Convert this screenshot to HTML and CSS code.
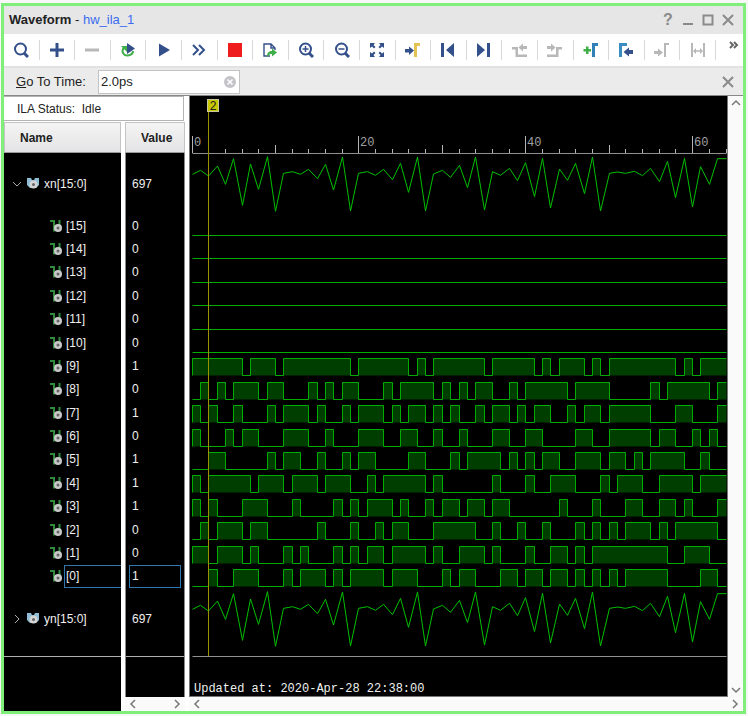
FILE: index.html
```html
<!DOCTYPE html>
<html lang="en">
<head>
<meta charset="utf-8">
<title>Waveform - hw_ila_1</title>
<link rel="stylesheet" href="styles.css">
</head>
<body>
<main class="window">
  <header class="titlebar">
    <h1 class="title">Waveform <span class="dash">-</span> <span class="core">hw_ila_1</span></h1>
    <div class="window-buttons">
      <button type="button" aria-label="Help" class="help">?</button>
      <button type="button" aria-label="Minimize"><svg viewBox="0 0 12 12"><path d="M1 10H11"/></svg></button>
      <button type="button" aria-label="Maximize"><svg viewBox="0 0 12 12"><path d="M1.500 1.500H10.500V10.500H1.500Z"/></svg></button>
      <button type="button" aria-label="Close"><svg viewBox="0 0 12 12"><path d="M1 1L11 11M11 1L1 11"/></svg></button>
    </div>
  </header>

  <div class="toolbar" role="toolbar">
    <button type="button" aria-label="Find"><svg viewBox="0 0 16 16"><g class="line"><circle cx="7.500" cy="7" r="5.500"/><path d="M11 11L15 15" stroke-width="3"/></g></svg></button>
    <button type="button" aria-label="Add"><svg viewBox="0 0 16 16"><path class="navy" d="M6.500 1h3v5.500H15v3H9.500V15h-3V9.500H1v-3h5.500z"/></svg></button>
    <button type="button" aria-label="Remove"><svg viewBox="0 0 16 16"><path class="gray" d="M1 6.500h14v3H1z"/></svg></button>
    <button type="button" aria-label="Re-trigger"><svg viewBox="0 0 16 16"><path d="M3.500 6C1 10 4 14 8 13.500C11 13 13 11.500 13 9" fill="none" stroke="#3fae49" stroke-width="2"/><path class="green" d="M1 4h6v6z"/><path class="navy" d="M7 1l8 5.500L7 12z"/></svg></button>
    <button type="button" aria-label="Run trigger"><svg viewBox="0 0 16 16"><path class="navy" d="M3 1.500l11 6.500-11 6.500z"/></svg></button>
    <button type="button" aria-label="Run immediately"><svg viewBox="0 0 16 16"><path class="line" d="M2 3l5 5-5 5M8 3l5 5-5 5"/></svg></button>
    <button type="button" aria-label="Stop"><svg viewBox="0 0 16 16"><path fill="#ee1c1c" d="M1 1h14v14H1z"/></svg></button>
    <button type="button" aria-label="Export"><svg viewBox="0 0 16 16"><path fill="none" stroke="#34508a" stroke-width="1.400" d="M8 14H2V2h7l4 4v2M9 2v4h4"/><path class="green" d="M10 6.500l5 4-5 4V12c-2 0-3 .500-5 3 0-4.500 2-6 5-6z"/></svg></button>
    <button type="button" aria-label="Zoom in"><svg viewBox="0 0 16 16"><g class="line"><circle cx="7.500" cy="7" r="5.500"/><path d="M11 11L15 15" stroke-width="3"/><path stroke-width="1.500" d="M4.500 7h6M7.500 4v6"/></g></svg></button>
    <button type="button" aria-label="Zoom out"><svg viewBox="0 0 16 16"><g class="line"><circle cx="7.500" cy="7" r="5.500"/><path d="M11 11L15 15" stroke-width="3"/><path stroke-width="1.500" d="M4.500 7h6"/></g></svg></button>
    <button type="button" aria-label="Zoom fit"><svg viewBox="0 0 16 16"><path class="navy" d="M1 1h5L4.500 3l2 2L5 6.500l-2-2L1 6zM15 1v5l-2-1.500-2 2L9.500 5l2-2L10 1zM1 15v-5l2 1.500 2-2L6.500 11l-2 2L6 15zM15 15h-5l1.500-2-2-2L11 9.500l2 2 2-1.500z"/></svg></button>
    <button type="button" aria-label="Go to cursor"><svg viewBox="0 0 16 16"><path class="navy" d="M0 7h4V4.500l5 4L4 13v-2.500H0z"/><path fill="none" stroke="#e2c455" stroke-width="3" d="M10.500 15V2.500H15"/></svg></button>
    <button type="button" aria-label="Go to start"><svg viewBox="0 0 16 16"><path class="navy" d="M1 1h3v14H1zM14 1v14L6 8z"/></svg></button>
    <button type="button" aria-label="Go to end"><svg viewBox="0 0 16 16"><path class="navy" d="M11 1h3v14h-3zM1 1v14L9 8z"/></svg></button>
    <button type="button" aria-label="Previous transition"><svg viewBox="0 0 16 16"><path class="gray" d="M0 5h6v7.500h9V15H3.500V7.500H0zM6.500 5.500L11 1.500V4h4v3h-4v2.500z"/></svg></button>
    <button type="button" aria-label="Next transition"><svg viewBox="0 0 16 16"><path class="gray" d="M15 5H9v7.500H0V15h11.500V7.500H15zM8.500 5.500L4 1.500V4H0v3h4v2.500z"/></svg></button>
    <button type="button" aria-label="Add marker"><svg viewBox="0 0 16 16"><path class="green" d="M3 4.500h2.500V7H8v2.500H5.500V12H3V9.500H.500V7H3z"/><path fill="none" stroke="#2f7fb8" stroke-width="3" d="M10.500 15V2.500H15"/></svg></button>
    <button type="button" aria-label="Previous marker"><svg viewBox="0 0 16 16"><path fill="none" stroke="#3b8cc0" stroke-width="3" d="M2.500 15V2.500H9"/><path class="navy" d="M15 8h-4V5.500L5.500 10 11 14.500V12h4z"/></svg></button>
    <button type="button" aria-label="Next marker"><svg viewBox="0 0 16 16"><path class="gray" d="M0 9h4V6.500l5 4-5 4V12H0z"/><path fill="none" stroke="#b8b8b8" stroke-width="2" d="M11 15V2h4"/></svg></button>
    <button type="button" aria-label="Swap cursors"><svg viewBox="0 0 16 16"><path class="gray" d="M1 1h2v14H1zM13 1h2v14h-2zM3 9l3-3v2.250h4V6l3 3-3 3V9.750H6V12z"/></svg></button>
    <button type="button" class="more" aria-label="More tools"><svg viewBox="0 0 10 10"><path d="M1 2l3 3-3 3M5 2l3 3-3 3"/></svg></button>
  </div>

  <form class="gotobar">
    <label for="time"><u>G</u>o To Time:</label>
    <div class="field">
      <input id="time" type="text" value="2.0ps">
      <button type="button" aria-label="Clear"><svg viewBox="0 0 12 12"><circle cx="6" cy="6" r="6" fill="#c4c4c8"/><path d="M3.500 3.500l5 5M8.500 3.500l-5 5" stroke="#fff" stroke-width="1.500"/></svg></button>
    </div>
    <button type="button" class="close" aria-label="Close bar"><svg viewBox="0 0 12 12"><path d="M1 1L11 11M11 1L1 11"/></svg></button>
  </form>

  <div class="content">
    <section class="signals">
      <p class="status">ILA Status: &nbsp;Idle</p>
      <div class="columns">
        <div class="column">
          <h2>Name</h2>
          <div class="cells names" id="names"></div>
        </div>
        <div class="column">
          <h2>Value</h2>
          <div class="cells values" id="values"></div>
          <div class="hscroll"><svg viewBox="0 0 8 10"><path d="M6 1L2 5l4 4"/></svg><svg viewBox="0 0 8 10"><path d="M2 1l4 4-4 4"/></svg></div>
        </div>
      </div>
    </section>
    <section class="viewer">
      <div class="plot"><svg id="plot" role="img" aria-label="Signal waveforms"></svg><p class="updated">Updated at: 2020-Apr-28 22:38:00</p></div>
      <div class="vscroll"><svg viewBox="0 0 10 8"><path d="M1 6l4-4 4 4"/></svg><svg viewBox="0 0 10 8"><path d="M1 2l4 4 4-4"/></svg></div>
      <div class="hscroll"><svg viewBox="0 0 8 10"><path d="M6 1L2 5l4 4"/></svg><svg viewBox="0 0 8 10"><path d="M2 1l4 4-4 4"/></svg></div>
    </section>
  </div>
</main>
<script src="wave.js"></script>
</body>
</html>
```
FILE: styles.css
```css
* { box-sizing: border-box; }

body {
  margin: 0;
  background: #f7f7f8;
  color: #222;
  font: 12px/16px "Liberation Sans", Arial, sans-serif;
}

h1, h2, p { margin: 0; font-size: inherit; }

button {
  padding: 0;
  border: 0;
  background: none;
  color: inherit;
  font: inherit;
}

svg { display: block; }

.window {
  display: flex;
  flex-direction: column;
  height: calc(100vh - 5px);
  min-height: 700px;
  margin: 3px 2px 2px 1px;
  border: 3px solid #80ee7a;
  background: #fff;
}

/* Title bar */
.titlebar {
  display: flex;
  align-items: center;
  justify-content: space-between;
  height: 28px;
  padding: 0 9px 0 5px;
  background: #e6e6e6;
}
.title { font-size: 13px; }
.dash { font-weight: normal; }
.core { color: #3b6cf0; font-weight: normal; }
.window-buttons { display: flex; gap: 8px; color: #8a8a8a; }
.window-buttons button { width: 12px; height: 16px; }
.window-buttons svg, .close svg {
  width: 12px;
  height: 12px;
  margin: auto;
  fill: none;
  stroke: #8a8a8a;
  stroke-width: 2;
}
.window-buttons .help { font-size: 16px; font-weight: bold; }

/* Toolbar */
.toolbar {
  display: flex;
  align-items: center;
  height: 34px;
  border-bottom: 2px solid #e2e2e2;
}
.toolbar button {
  flex: 1;
  height: 20px;
  border-right: 1px solid #d8d8d8;
}
.toolbar svg { width: 16px; height: 16px; margin: auto; }
.toolbar .more { flex: 0 0 27px; border: 0; }
.toolbar .more svg {
  width: 10px;
  height: 10px;
  margin: 0 0 10px 13px;
  fill: none;
  stroke: #666;
  stroke-width: 2;
}
.navy { fill: #34508a; }
.gray { fill: #b8b8b8; }
.green { fill: #3fae49; }
.line { fill: none; stroke: #34508a; stroke-width: 2; }

/* Go-to-time bar */
.gotobar {
  display: flex;
  align-items: center;
  height: 27px;
  padding: 0 9px 0 12px;
  background: #ebebeb;
}
.gotobar label { flex: 0 0 82px; }
.gotobar label, .field { font-size: 13px; }
.field {
  display: flex;
  align-items: center;
  width: 142px;
  height: 24px;
  padding: 0 3px 0 2px;
  border: 1px solid #c2c2c2;
  background: #fff;
}
.field input {
  flex: 1;
  min-width: 0;
  padding: 0;
  border: 0;
  outline: 0;
  color: #222;
  font: inherit;
}
.field svg { width: 12px; height: 12px; }
.close { margin-left: auto; }

/* Signal list */
.content {
  display: flex;
  flex: 1;
  gap: 4px;
  min-height: 0;
  border-top: 1px solid #888;
}
.signals { display: flex; flex: 0 0 181px; flex-direction: column; }
.status {
  height: 25px;
  margin: 0 1px 1px 0;
  padding: 4px 13px;
  border: 1px solid #b4b4b4;
  border-left: 0;
}
.columns { display: grid; flex: 1; grid-template-columns: 117px 60px; gap: 4px; }
.column { display: flex; flex-direction: column; }
.column h2 {
  height: 31px;
  padding: 7px 15px;
  border: 1px solid #c4c4c4;
  border-bottom-color: #999;
  background: linear-gradient(#f4f4f4, #e4e4e6);
}
.cells { flex: 1; background: #000; color: #f0f0f0; }
.values { border: solid #888; border-width: 0 1px; }
.bus { display: flex; align-items: center; height: 61px; padding-left: 8px; }
.bus.last { height: 69px; padding-bottom: 6px; border-bottom: 1px solid #b0b0b0; }
.bits { display: grid; grid-template-rows: repeat(16, 1fr); height: 374px; }
.bit { display: flex; align-items: center; padding-left: 46px; }
.label { display: flex; align-items: center; height: 23px; border: 1px solid transparent; }
.bit .label { flex: 1; padding-left: 1px; }
.selected .label { border-color: #2f77ad; }
.names .selected .label { border-right: 0; }
.values .bus { padding-left: 6px; }
.values .bit { padding: 0 3px; }
.values .label { padding-left: 2px; }
.chevron { width: 10px; height: 10px; fill: none; stroke: #aaa; stroke-width: 1; }
.bus-icon { width: 14px; height: 14px; margin: 0 2px 0 5px; }
.bit-icon { width: 14px; height: 14px; }

/* Scroll bars */
.hscroll, .vscroll { display: flex; justify-content: space-between; background: #fafafa; }
.hscroll { align-items: center; height: 14px; padding: 0 4px; }
.vscroll { flex-direction: column; align-items: center; padding: 3px 2px; }
.hscroll svg { width: 8px; height: 10px; }
.vscroll svg { width: 10px; height: 8px; }
.hscroll path, .vscroll path { fill: none; stroke: #777; stroke-width: 1.5; }

/* Waveform viewer */
.viewer {
  display: grid;
  flex: 1;
  grid-template: 1fr 14px / 1fr 15px;
  min-width: 0;
}
.viewer .hscroll { grid-column: 1 / -1; }
.plot {
  display: flex;
  flex-direction: column;
  justify-content: space-between;
  min-width: 0;
  border: solid #777;
  border-width: 0 1px 1px;
  background: #000;
}
#plot { width: 100%; height: 562px; }
.updated {
  padding: 0 0 0 4px;
  color: #f0f0f0;
  font: 12px/14px "Liberation Mono", "Courier New", monospace;
}
.tick { stroke: #b4b4b4; }
.rule { stroke: #909090; }
.scale { fill: #a0a0a0; font: 12px "Liberation Mono", monospace; }
.analog { fill: none; stroke: #00c000; }
.level { fill: none; stroke: #00ac00; }
.high { fill: #003e00; }
.cursor { stroke: #9a9200; }
.flag { fill: #c8c800; stroke: #c8c8a0; }
.flag-text { fill: #222; font: 12px "Liberation Mono", monospace; }
```
FILE: wave.js
```js
// Last sample index of the capture window.
const SAMPLES = 64;
const CURSOR = 2;

// Vertical position of each sample of the analog trace, in thirds of a pixel.
const analog = [
  238, 226, 243, 213, 268, 191, 331, 207, 283, 185, 349, 235, 230, 238, 223, 251,
  208, 285, 186, 348, 235, 230, 241, 223, 254, 205, 292, 186, 348, 237, 226, 247,
  211, 278, 186, 345, 230, 241, 220, 257, 203, 305, 190, 339, 222, 256, 205, 296,
  186, 348, 235, 231, 235, 229, 242, 220, 260, 199, 308, 190, 336, 215, 268, 191, 191
];

// Intervals during which each bit is high; bits not listed stay low.
const high = {
  9: "0-6 7-10 11-19 20-26 27-28 29-35 36-41 42-43 44-47 48-49 50-58 59-60 61-64",
  8: "1-2 3-4 5-8 9-11 14-15 16-17 18-20 23-24 25-29 30-31 32-33 34-36 38-39 40-45 46-50 55-56 57-62 63-64",
  7: "0-1 2-3 5-6 9-10 11-14 15-16 18-19 20-23 24-25 26-28 29-30 31-32 34-35 36-38 39-40 41-43 45-46 47-49 50-55 58-60 63-64",
  6: "0-1 4-5 6-8 11-14 16-17 20-23 25-27 29-30 32-33 36-38 40-42 46-48 50-55 56-58 60-61 62-63",
  5: "2-4 9-10 11-13 15-16 18-19 20-22 26-28 31-32 33-37 38-39 40-41 42-44 46-49 50-52 53-54 55-59 61-62",
  4: "0-1 2-7 8-11 12-15 16-19 21-22 23-28 29-30 36-37 40-41 43-46 49-50 51-54 56-60 61-64",
  3: "0-1 2-3 6-9 12-13 17-18 19-20 21-24 25-26 28-29 30-32 33-35 36-38 44-45 48-49 52-54 56-58 59-60 63-64",
  2: "1-2 3-6 7-9 15-16 19-20 22-23 24-26 29-34 36-37 39-40 42-43 46-47 48-49 50-51 52-55 56-57 58-63",
  1: "0-2 3-6 7-8 11-12 13-14 17-18 19-20 21-23 24-28 29-30 32-35 36-37 40-41 43-45 46-47 48-57 59-62",
  0: "2-3 5-8 11-12 13-16 17-18 19-23 24-27 30-31 32-34 37-39 40-42 43-45 46-47 48-49 50-51 52-57 61-63"
};
const bitValues = { 9: 1, 7: 1, 5: 1, 4: 1, 3: 1, 0: 1 };

const busIcon = '<svg class="bus-icon" viewBox="0 0 14 14"><path fill="#8fbcd6" d="M0 1h4l1 2h2l1-2h4v7l-3 3H3L0 8z"/><circle cx="6.500" cy="7.500" r="4" fill="#d4d4d4"/><circle cx="6.500" cy="7.500" r="1.500" fill="#666"/></svg>';
const bitIcon = '<svg class="bit-icon" viewBox="0 0 14 14"><path fill="none" stroke="#2f8a3c" stroke-width="2" d="M0 2h4v10.500M9.500 1v6"/><circle cx="8" cy="9" r="4" fill="#c8c8c8"/><circle cx="8" cy="9" r="1.500" fill="#666"/></svg>';
const chevron = d => `<svg class="chevron" viewBox="0 0 10 10"><path d="${d}"/></svg>`;

function bitRows(render) {
  let rows = "";
  for (let bit = 15; bit >= 0; bit--) {
    rows += `<div class="bit${bit === 0 ? " selected" : ""}">${render(bit)}</div>`;
  }
  return `<div class="bits">${rows}</div>`;
}

document.getElementById("names").innerHTML =
  `<div class="bus">${chevron("M1 3l4 4 4-4")}${busIcon}<span class="label">xn[15:0]</span></div>` +
  bitRows(bit => `${bitIcon}<span class="label">[${bit}]</span>`) +
  `<div class="bus last">${chevron("M3 1l4 4-4 4")}${busIcon}<span class="label">yn[15:0]</span></div>`;

document.getElementById("values").innerHTML =
  '<div class="bus">697</div>' +
  bitRows(bit => `<span class="label">${bitValues[bit] || 0}</span>`) +
  '<div class="bus last">697</div>';

const plot = document.getElementById("plot");

function draw() {
  const left = 2;
  const width = plot.clientWidth - 1;
  const x = k => Math.floor(left + k * (width - left) / SAMPLES) + 0.5;
  let out = "";

  // Ruler
  out += `<path class="rule" d="M${x(0)} 57.5H${x(SAMPLES)}"/>`;
  for (let k = 0; k <= SAMPLES; k += 2) {
    const top = k % 20 === 0 ? 40 : k % 10 === 0 ? 49 : 53;
    out += `<path class="tick" d="M${x(k)} ${top}V57"/>`;
    if (k % 20 === 0) out += `<text class="scale" x="${x(k) + 1.5}" y="50">${k}</text>`;
  }

  // Analog buses
  for (const offset of [-1, 434]) {
    const points = analog.map((v, k) => `${x(k)},${v / 3 + offset}`);
    out += `<polyline class="analog" points="${points.join(" ")}"/>`;
  }

  // Bits
  for (let bit = 15; bit >= 0; bit--) {
    const low = Math.round(139 + (15 - bit) * 23.4) + 0.5;
    const top = low - 17;
    let d = `M${x(0)} ${low}`;
    for (const span of (high[bit] || "").split(" ").filter(Boolean)) {
      const [from, to] = span.split("-").map(Number);
      out += `<rect class="high" x="${x(from)}" y="${top}" width="${x(to) - x(from)}" height="17"/>`;
      d += `H${x(from)}V${top}H${x(to)}`;
      if (to < SAMPLES) d += `V${low}`;
    }
    if (!d.endsWith(`H${x(SAMPLES)}`)) d += `H${x(SAMPLES)}`;
    out += `<path class="level" d="${d}"/>`;
  }

  // Cursor
  out += `<path class="rule" d="M${x(0)} 560.5H${x(SAMPLES)}"/>`;
  out += `<path class="cursor" d="M${x(CURSOR)} 16V560"/>`;
  out += `<rect class="flag" x="${x(CURSOR) - 1}" y="3.5" width="11" height="12"/>`;
  out += `<text class="flag-text" x="${x(CURSOR) + 1}" y="14">${CURSOR}</text>`;

  plot.innerHTML = out;
}

draw();
window.addEventListener("resize", draw);
```
